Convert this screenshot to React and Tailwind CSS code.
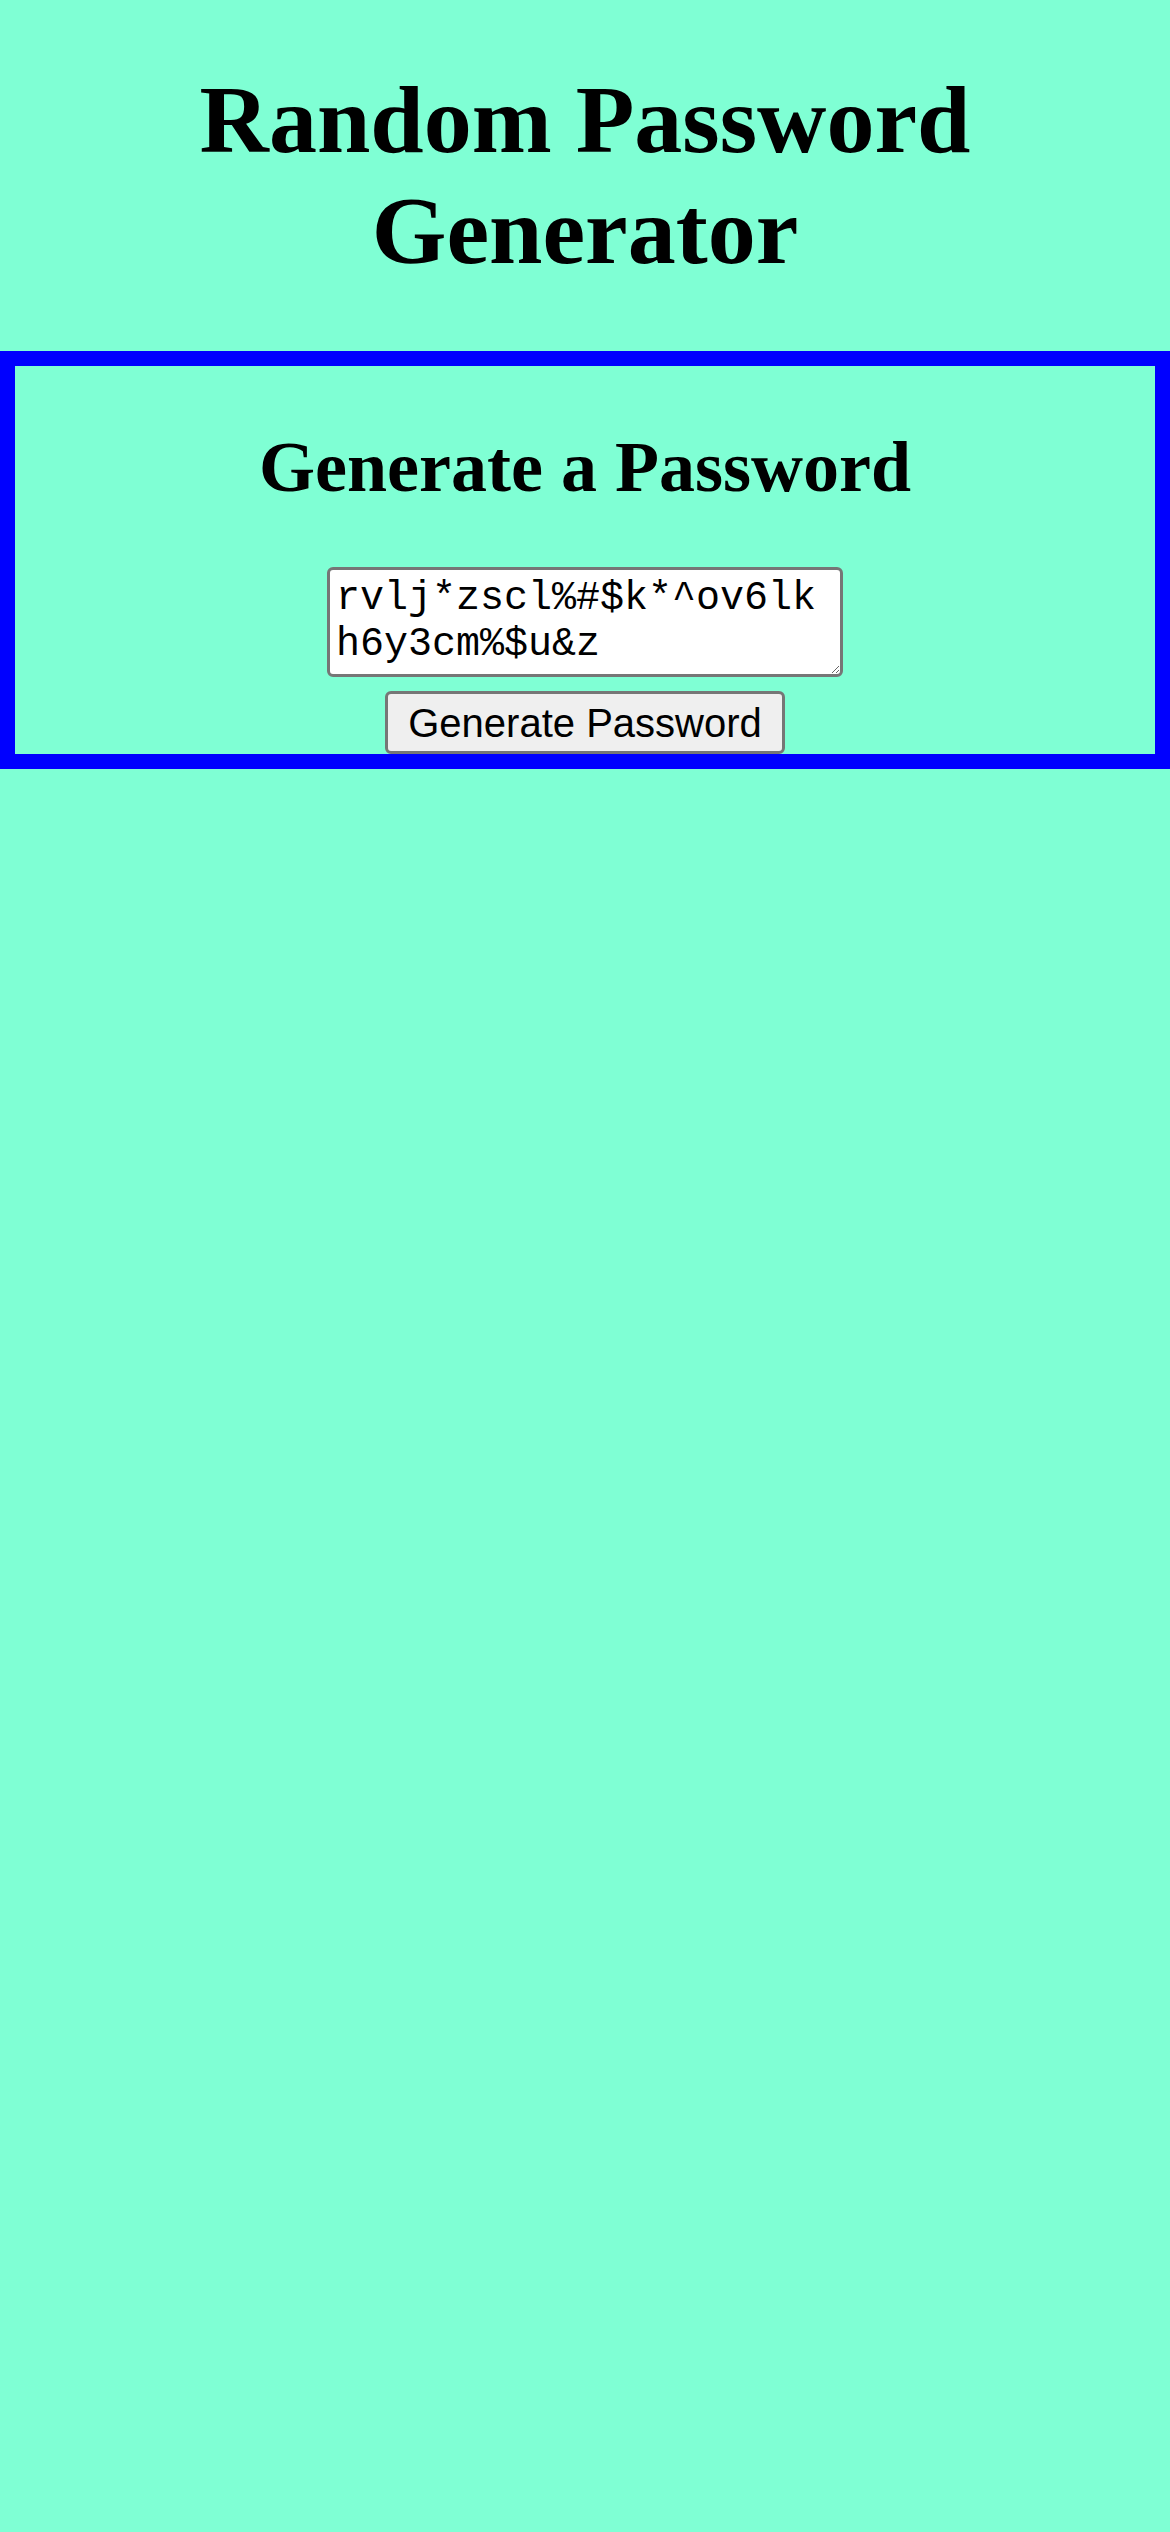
import React, { useState } from 'react';

const CHARS = 'abcdefghijklmnopqrstuvwxyz0123456789!@#$%^&*';

function makePassword(length = 31) {
  let out = '';
  for (let i = 0; i < length; i++) {
    out += CHARS[Math.floor(Math.random() * CHARS.length)];
  }
  return out;
}

function App() {
  const [password, setPassword] = useState('rvlj*zscl%#$k*^ov6lkh6y3cm%$u&z');

  return (
    <div className="min-h-screen bg-[#7fffd4] text-black font-['Liberation_Serif','Times_New_Roman',serif] overflow-hidden">
      <h1 className="mt-[64px] mb-[65px] text-center text-[96px] font-bold leading-[111px]">
        Random Password Generator
      </h1>

      <div className="border-[15px] border-[#0000ff] flex flex-col items-center">
        <h2 className="mt-[60px] mb-[58px] text-center text-[72px] font-bold leading-[83px]">
          Generate a Password
        </h2>
        <textarea
          readOnly
          rows={2}
          value={password}
          className="w-[516px] h-[110px] bg-white border-[3px] border-[#767676] rounded-[6px] px-[6px] py-[6px] text-[40px] leading-[46px] font-['Liberation_Mono','Courier_New',monospace] text-black"
        />
        <button
          onClick={() => setPassword(makePassword())}
          className="mt-[14px] w-[400px] h-[63px] bg-[#efefef] border-[3px] border-[#767676] rounded-[6px] text-[40px] leading-none font-['Liberation_Sans',Arial,sans-serif] text-black"
        >
          Generate Password
        </button>
      </div>
    </div>
  );
}

export default App;
